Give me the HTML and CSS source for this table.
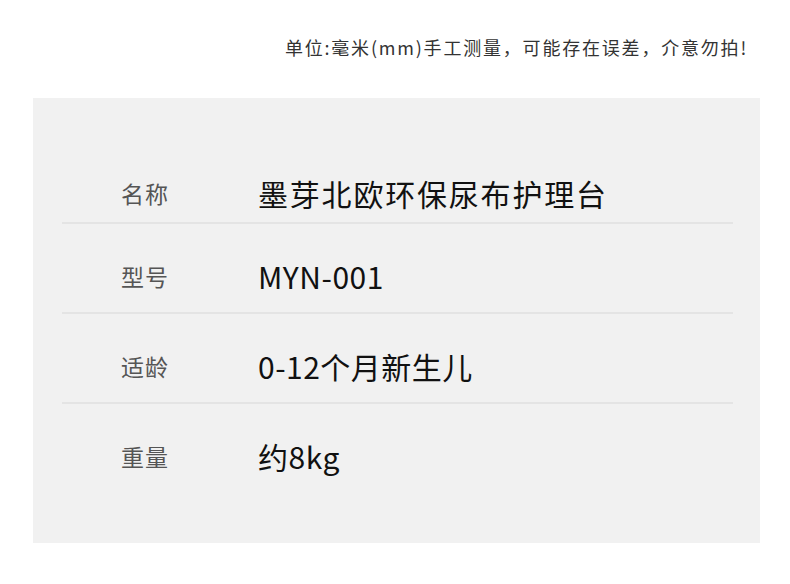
FILE: index.html
```html
<!DOCTYPE html>
<html lang="zh-CN">
<head>
    <meta charset="UTF-8">
    <meta name="viewport" content="width=device-width, initial-scale=1.0">
    <title>产品参数</title>
    <link rel="stylesheet" href="styles.css">
</head>
<body>
    <p class="note">单位:毫米(mm)手工测量，可能存在误差，介意勿拍!</p>

    <div class="spec-panel">
        <div class="spec-row">
            <span class="spec-label">名称</span>
            <span class="spec-value spec-value-wide">墨芽北欧环保尿布护理台</span>
        </div>
        <div class="spec-row">
            <span class="spec-label">型号</span>
            <span class="spec-value">MYN-001</span>
        </div>
        <div class="spec-row">
            <span class="spec-label">适龄</span>
            <span class="spec-value">0-12个月新生儿</span>
        </div>
        <div class="spec-row">
            <span class="spec-label">重量</span>
            <span class="spec-value">约8kg</span>
        </div>
    </div>
</body>
</html>
```

FILE: styles.css
```css
body {
    margin: 0;
    background-color: #fff;
    font-family: "Noto Sans CJK SC", "Noto Sans", sans-serif;
}

.note {
    margin: 0;
    padding: 35px 42px 0 0;
    text-align: right;
    font-size: 18px;
    line-height: 24px;
    letter-spacing: 1.8px;
    color: #333;
}

.spec-panel {
    width: 727px;
    margin: 39px 0 0 33px;
    padding: 36px 27px 49px 29px;
    box-sizing: border-box;
    background-color: #f1f1f1;
}

.spec-row {
    display: flex;
    align-items: center;
    height: 90px;
    box-sizing: border-box;
    padding-top: 16px;
    border-bottom: 2px solid #e4e4e4;
}

.spec-row:first-child {
    padding-top: 30px;
}

.spec-row:last-child {
    border-bottom-color: transparent;
}

.spec-label {
    width: 137px;
    padding-left: 59px;
    font-size: 23px;
    letter-spacing: 1px;
    color: #555;
}

.spec-value {
    font-size: 30px;
    letter-spacing: 0.5px;
    color: #111;
}

.spec-value-wide {
    letter-spacing: 1.8px;
}
```
